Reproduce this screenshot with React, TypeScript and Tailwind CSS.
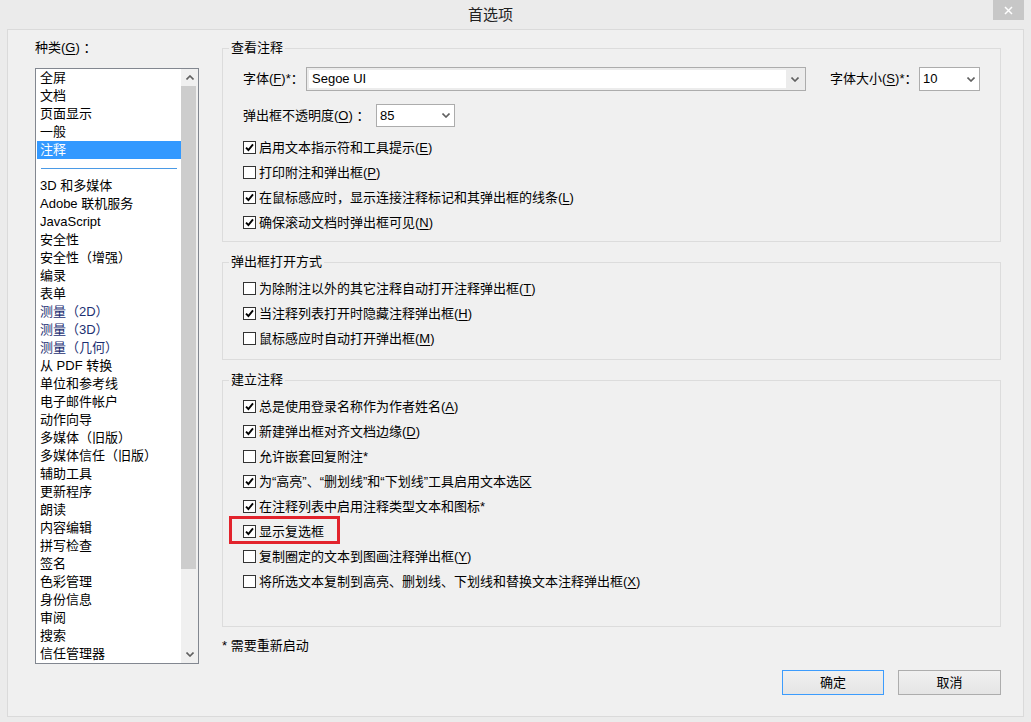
import React from 'react';

type Opt = { label: string; k?: string; on: boolean; mark?: boolean };

const viewOpts: Opt[] = [
  { label: '启用文本指示符和工具提示', k: 'E', on: true },
  { label: '打印附注和弹出框', k: 'P', on: false },
  { label: '在鼠标感应时，显示连接注释标记和其弹出框的线条', k: 'L', on: true },
  { label: '确保滚动文档时弹出框可见', k: 'N', on: true },
];

const popupOpts: Opt[] = [
  { label: '为除附注以外的其它注释自动打开注释弹出框', k: 'T', on: false },
  { label: '当注释列表打开时隐藏注释弹出框', k: 'H', on: true },
  { label: '鼠标感应时自动打开弹出框', k: 'M', on: false },
];

const createOpts: Opt[] = [
  { label: '总是使用登录名称作为作者姓名', k: 'A', on: true },
  { label: '新建弹出框对齐文档边缘', k: 'D', on: true },
  { label: '允许嵌套回复附注*', on: false },
  { label: '为“高亮”、“删划线”和“下划线”工具启用文本选区', on: true },
  { label: '在注释列表中启用注释类型文本和图标*', on: true },
  { label: '显示复选框', on: true, mark: true },
  { label: '复制圈定的文本到图画注释弹出框', k: 'Y', on: false },
  { label: '将所选文本复制到高亮、删划线、下划线和替换文本注释弹出框', k: 'X', on: false },
];

const topItems = ['全屏', '文档', '页面显示', '一般', '注释'];
const moreItems = [
  '3D 和多媒体', 'Adobe 联机服务', 'JavaScript', '安全性', '安全性（增强）', '编录', '表单',
  '测量（2D）', '测量（3D）', '测量（几何）', '从 PDF 转换', '单位和参考线', '电子邮件帐户',
  '动作向导', '多媒体（旧版）', '多媒体信任（旧版）', '辅助工具', '更新程序', '朗读', '内容编辑',
  '拼写检查', '签名', '色彩管理', '身份信息', '审阅', '搜索', '信任管理器',
];

function Chevron({ up }: { up?: boolean }) {
  return (
    <svg width="8" height="5" viewBox="0 0 8 5">
      <path d={up ? 'M0.5 4.5 L4 1 L7.5 4.5' : 'M0.5 0.5 L4 4 L7.5 0.5'} stroke="#606060" strokeWidth="1.6" fill="none" />
    </svg>
  );
}

function Key({ k }: { k: string }) {
  return <>(<u className="decoration-1 underline-offset-2">{k}</u>)</>;
}

function Check({ o }: { o: Opt }) {
  return (
    <div className="relative h-[25px] flex items-center">
      {o.mark && <span className="absolute left-[-14px] top-[-3px] w-[111px] h-[28px] border-[3px] border-[#e2232c]" />}
      <span className="w-[13px] h-[13px] border border-[#333333] bg-white flex items-center justify-center shrink-0">
        {o.on && (
          <svg width="9" height="9" viewBox="0 0 9 9">
            <path d="M1 4.6 L3.4 7 L8 1.4" stroke="#000" strokeWidth="1.9" fill="none" />
          </svg>
        )}
      </span>
      <span className="ml-[3px] leading-[18px] whitespace-nowrap">
        {o.label}
        {o.k && <Key k={o.k} />}
      </span>
    </div>
  );
}

function Group({ title, children, className }: { title: string; children: React.ReactNode; className?: string }) {
  return (
    <fieldset className={'border border-[#dcdcdc] ' + (className ?? '')}>
      <legend className="ml-[6px] px-[2px] leading-[18px]">{title}</legend>
      {children}
    </fieldset>
  );
}

function Combo({ value, w, editable }: { value: string; w: string; editable?: boolean }) {
  if (editable) {
    return (
      <div className={'h-[24px] border border-[#acacac] bg-[#ececec] flex p-[2px] ' + w}>
        <div className="flex-1 bg-white pl-[3px] leading-[18px]">{value}</div>
        <div className="w-[17px] flex items-center justify-center">
          <Chevron />
        </div>
      </div>
    );
  }
  return (
    <div className={'h-[23px] border border-[#acacac] bg-white flex items-center ' + w}>
      <div className="flex-1 pl-[3px] leading-[18px]">{value}</div>
      <div className="w-[17px] flex items-center justify-center">
        <Chevron />
      </div>
    </div>
  );
}

export default function App() {
  return (
    <div className="w-[1031px] h-[722px] bg-[#ebebeb] flex flex-col text-[13px] text-black font-['Liberation_Sans','Noto_Sans_CJK_SC',sans-serif]">
      {/* title bar */}
      <div className="h-[29px] flex items-start shrink-0">
        <div className="ml-[468px] mt-[5px] text-[15px] leading-[20px] text-[#222]">首选项</div>
        <div className="ml-auto mr-[7px] w-[31px] h-[20px] bg-[#c7c7c7] flex items-center justify-center">
          <svg width="9" height="9" viewBox="0 0 9 9">
            <path d="M1 1 L8 8 M8 1 L1 8" stroke="#fff" strokeWidth="1.5" />
          </svg>
        </div>
      </div>

      {/* body */}
      <div className="mx-[7px] mb-[5px] flex-1 border border-[#dadada] bg-[#f0f0f0] flex">
        {/* categories */}
        <div className="pl-[27px] pt-[9px]">
          <div className="leading-[18px] mb-[11px]">
            种类<Key k="G" /> ：
          </div>
          <div className="w-[164px] h-[596px] border border-[#828790] bg-white flex">
            <div className="flex-1">
              {topItems.map((t) => (
                <div
                  key={t}
                  className={
                    'h-[18px] leading-[18px] ml-[1px] pl-[3px] ' + (t === '注释' ? 'bg-[#3399ff] text-white' : '')
                  }
                >
                  {t}
                </div>
              ))}
              <div className="h-[18px] flex items-center pl-[5px] pr-[4px]">
                <div className="h-px w-full bg-[#4a9ae6]" />
              </div>
              {moreItems.map((t) => (
                <div
                  key={t}
                  className={'h-[18px] leading-[18px] ml-[1px] pl-[3px] whitespace-nowrap ' + (t.startsWith('测量') ? 'text-[#1c2f72]' : '')}
                >
                  {t}
                </div>
              ))}
            </div>
            <div className="w-[17px] bg-[#f0f0f0] flex flex-col">
              <div className="h-[17px] flex items-center justify-center">
                <Chevron up />
              </div>
              <div className="h-[483px] w-[15px] bg-[#cdcdcd]" />
              <div className="flex-1" />
              <div className="h-[17px] flex items-center justify-center">
                <Chevron />
              </div>
            </div>
          </div>
        </div>

        {/* options */}
        <div className="ml-[23px] w-[779px] pt-[9px] flex flex-col">
          <Group title="查看注释">
            <div className="pl-[20px] pt-[10px] pb-[6px]">
              <div className="flex items-center h-[24px]">
                <div className="w-[63px] leading-[18px] whitespace-nowrap">
                  字体<Key k="F" />*：
                </div>
                <Combo value="Segoe UI" w="w-[500px]" editable />
                <div className="ml-[24px] w-[89px] leading-[18px] whitespace-nowrap">
                  字体大小<Key k="S" />*：
                </div>
                <Combo value="10" w="w-[61px] h-[24px]" />
              </div>
              <div className="flex items-center h-[23px] mt-[13px]">
                <div className="w-[133px] leading-[18px] whitespace-nowrap">
                  弹出框不透明度<Key k="O" /> ：
                </div>
                <Combo value="85" w="w-[79px]" />
              </div>
              <div className="mt-[8px]">
                {viewOpts.map((o) => (
                  <Check key={o.label} o={o} />
                ))}
              </div>
            </div>
          </Group>

          <Group title="弹出框打开方式" className="mt-[11px]">
            <div className="pl-[20px] pt-[5px] pb-[8px]">
              {popupOpts.map((o) => (
                <Check key={o.label} o={o} />
              ))}
            </div>
          </Group>

          <Group title="建立注释" className="mt-[11px]">
            <div className="pl-[20px] pt-[5px] pb-[32px]">
              {createOpts.map((o) => (
                <Check key={o.label} o={o} />
              ))}
            </div>
          </Group>

          <div className="mt-[10px] leading-[18px]">* 需要重新启动</div>

          <div className="mt-[15px] flex justify-end gap-[14px]">
            <button className="w-[102px] h-[25px] border border-[#3c9cfd] bg-gradient-to-b from-[#f0f0f0] to-[#e5e5e5] leading-[18px]">
              确定
            </button>
            <button className="w-[103px] h-[25px] border border-[#adadad] bg-gradient-to-b from-[#f0f0f0] to-[#e5e5e5] leading-[18px]">
              取消
            </button>
          </div>
        </div>
      </div>
    </div>
  );
}
